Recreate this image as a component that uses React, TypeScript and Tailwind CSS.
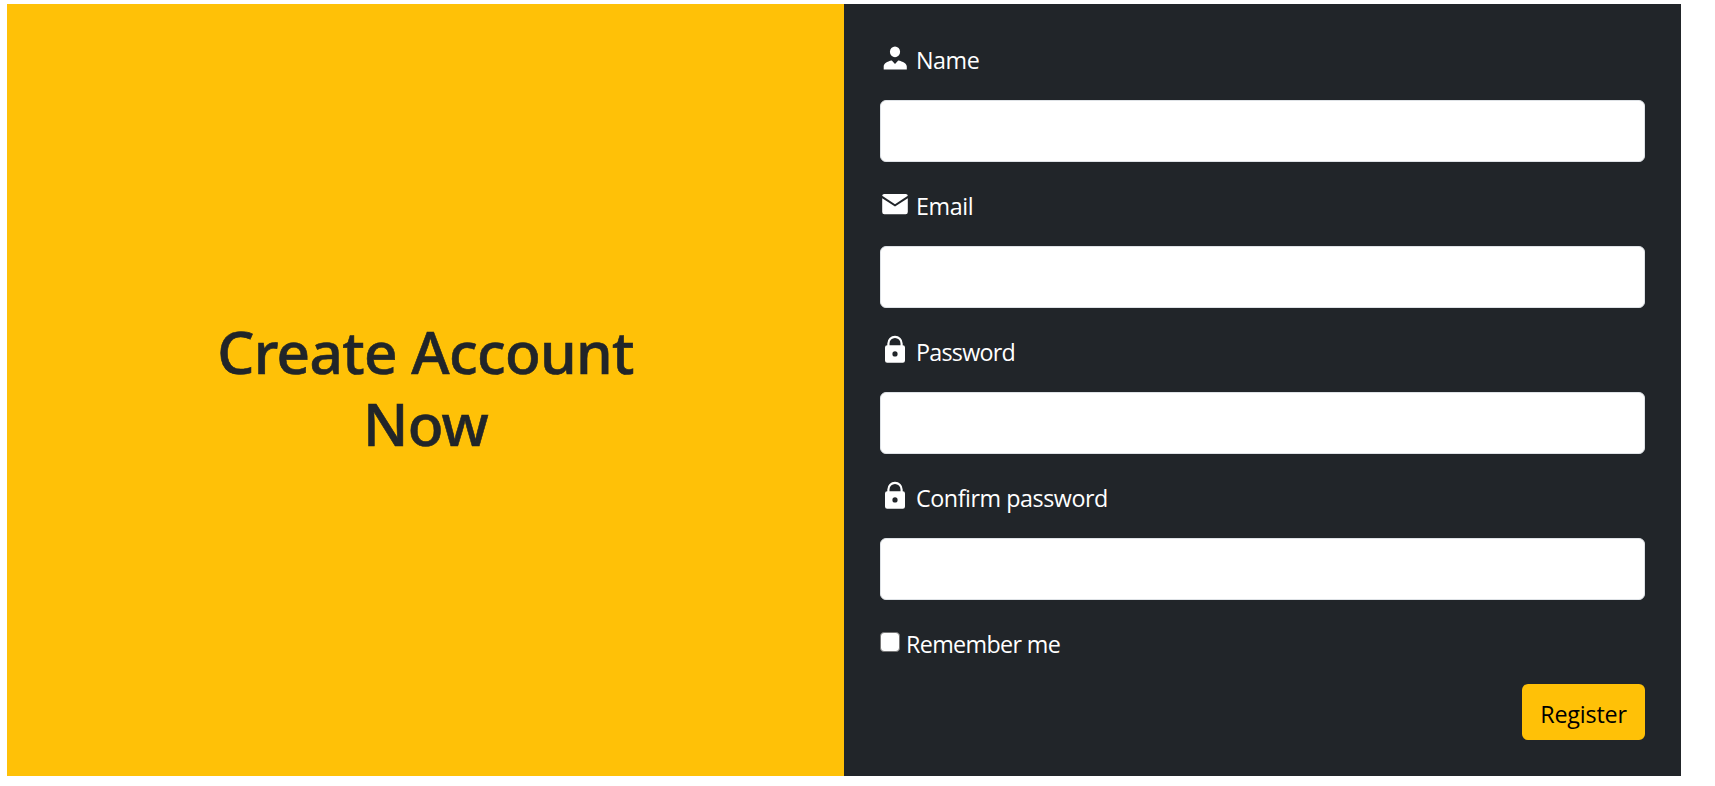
import type { ReactNode } from "react";

const UserIcon = () => (
  <svg viewBox="0 0 30 30" className="size-[30px] shrink-0" fill="currentColor">
    <ellipse cx="15" cy="8.8" rx="5.1" ry="5.4" />
    <path d="M3.7 26.4V23.4C3.7 20.6 7 18.2 11.8 17.4L15 20.9L18.2 17.4C23 18.2 26.8 20.6 26.8 23.4V26.4Z" />
  </svg>
);

const MailIcon = () => (
  <svg viewBox="0 0 30 30" className="size-[30px] shrink-0" fill="currentColor">
    <path d="M4.2 5H25.8Q27.7 5 27.8 6.8L15 15.2L2.2 6.8Q2.3 5 4.2 5Z" />
    <path d="M2.2 9.2L15 17.6L27.8 9.2V23Q27.8 25.2 25.6 25.2H4.4Q2.2 25.2 2.2 23Z" />
  </svg>
);

const LockIcon = () => (
  <svg viewBox="0 0 30 30" className="size-[30px] shrink-0" fill="currentColor">
    <path d="M8.4 12V8.4A6.6 6.6 0 0 1 21.6 8.4V12" fill="none" stroke="currentColor" strokeWidth="2.2" />
    <path
      fillRule="evenodd"
      d="M7.2 10.2H22.8Q25 10.2 25 12.4V25.6Q25 27.8 22.8 27.8H7.2Q5 27.8 5 25.6V12.4Q5 10.2 7.2 10.2ZM15 16.3A2.6 2.6 0 1 0 15 21.5A2.6 2.6 0 1 0 15 16.3Z"
    />
  </svg>
);

type FieldProps = { id: string; label: string; type: string; icon: ReactNode; spacing: string };

const Field = ({ id, label, type, icon, spacing }: FieldProps) => (
  <div className="mb-[27px]">
    <label htmlFor={id} className="mb-[27px] flex h-[30px] gap-1.5">
      {icon}
      <span className={`pt-0.5 leading-[30px] whitespace-nowrap ${spacing}`}>{label}</span>
    </label>
    <input
      id={id}
      type={type}
      className="block h-[62px] w-full rounded-[6px] border border-[#dee2e6] bg-white px-[18px] text-[#212529] outline-none"
    />
  </div>
);

export default function App() {
  return (
    <main className="h-[786px] bg-white pt-1 pl-[7px] font-['Open_Sans','Noto_Sans',sans-serif] text-[23.3px]">
      <div className="grid h-[772px] w-[1674px] grid-cols-2">
        <section className="flex items-center justify-center bg-[#ffc107] text-[#212529]">
          <h1 className="w-[460px] pb-[7px] text-center font-['Noto_Sans',sans-serif] text-[58.5px] leading-[72px] font-medium tracking-[-0.7px] [-webkit-text-stroke:0.6px_#212529]">
            Create Account Now
          </h1>
        </section>
        <form className="bg-[#212529] px-9 pt-[39px] text-white">
          <Field id="name" label="Name" type="text" icon={<UserIcon />} spacing="tracking-[-0.45px]" />
          <Field id="email" label="Email" type="email" icon={<MailIcon />} spacing="tracking-[-0.4px]" />
          <Field id="password" label="Password" type="password" icon={<LockIcon />} spacing="tracking-[-0.75px]" />
          <Field id="confirm" label="Confirm password" type="password" icon={<LockIcon />} spacing="tracking-[-0.45px]" />
          <label className="flex h-[30px] items-center gap-[6px]">
            <input
              type="checkbox"
              className="size-5 appearance-none rounded-[4px] border-[1.5px] border-[#767676] bg-white"
            />
            <span className="pt-[3px] leading-[30px] tracking-[-0.65px]">Remember me</span>
          </label>
          <div className="mt-[27px] flex justify-end">
            <button type="button" className="h-14 w-[123px] rounded-[6px] bg-[#ffc107] pt-1 tracking-[-0.2px] text-black">
              Register
            </button>
          </div>
        </form>
      </div>
    </main>
  );
}
